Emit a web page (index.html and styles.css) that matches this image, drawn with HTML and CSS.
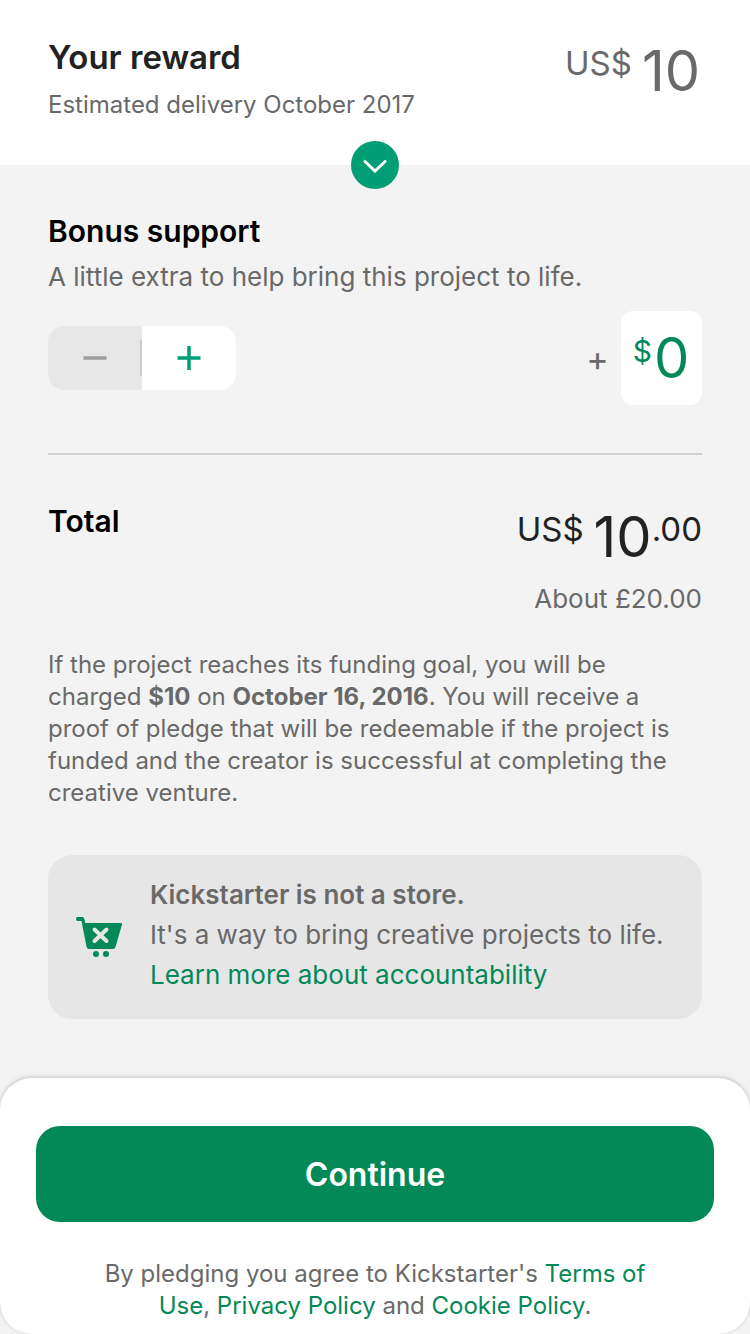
FILE: index.html
```html
<!DOCTYPE html>
<html lang="en">
<head>
<meta charset="utf-8">
<meta name="viewport" content="width=device-width, initial-scale=1">
<title>Your pledge</title>
<link rel="stylesheet" href="styles.css">
</head>
<body>
<main class="pledge">
  <header class="reward">
    <div class="reward-info">
      <h1 class="reward-title">Your reward</h1>
      <p class="delivery">Estimated delivery October 2017</p>
    </div>
    <p class="amount reward-amount"><span class="small">US$</span><span class="large">10</span></p>
    <button class="expand" type="button" aria-label="Show reward details">
      <svg width="24" height="16" viewBox="0 0 24 16" fill="none" stroke="#fff" stroke-width="3" stroke-linecap="round"><path d="M2 4.500 12 14 22 4.500"/></svg>
    </button>
  </header>
  <div class="content">
    <section class="bonus">
      <h2 class="heading">Bonus support</h2>
      <p class="bonus-text">A little extra to help bring this project to life.</p>
      <div class="bonus-controls">
        <div class="stepper">
          <button class="step minus" type="button" aria-label="Decrease bonus" disabled><svg width="24" height="24" viewBox="0 0 24 24"><path d="M.5 12H23.500" stroke="#9b9e9e" stroke-width="3.500"/></svg></button>
          <button class="step plus" type="button" aria-label="Increase bonus"><svg width="24" height="24" viewBox="0 0 24 24"><path d="M.5 12H23.500M12 0V24" stroke="#009e74" stroke-width="3.500"/></svg></button>
        </div>
        <div class="bonus-entry">
          <span class="sign">+</span>
          <label class="bonus-box"><span class="currency">$</span><input class="bonus-input" type="text" inputmode="numeric" value="0" aria-label="Bonus amount"></label>
        </div>
      </div>
    </section>
    <section class="total">
      <h2 class="heading">Total</h2>
      <div class="total-values">
        <p class="amount"><span class="small">US$</span><span class="large">10</span><span class="small cents">.00</span></p>
        <p class="about">About £20.00</p>
      </div>
    </section>
    <p class="terms">If the project reaches its funding goal, you will be charged <b>$10</b> on <b>October 16, 2016</b>. You will receive a proof of pledge that will be redeemable if the project is funded and the creator is successful at completing the creative venture.</p>
    <aside class="notice">
      <svg class="cart" width="48" height="44" viewBox="0 0 48 44"><path d="M1.500 4H6Q8 4 8.400 6L9.200 10H45Q46.500 10 46 11.500L39.500 34Q38.800 36 37 36H13Q11 36 10.600 34L5.500 8H1.500Q0 8 0 6T1.500 4Z" fill="#038857"/><path d="m18.500 16.500 12 11.500m0-11.500-12 11.500" stroke="#e6e6e6" stroke-width="4" stroke-linecap="round"/><circle cx="20" cy="41" r="3" fill="#038857"/><circle cx="30" cy="41" r="3" fill="#038857"/></svg>
      <div class="notice-text"><strong>Kickstarter is not a store.</strong><p>It's a way to bring creative projects to life.</p><a href="#accountability">Learn more about accountability</a></div>
    </aside>
  </div>
  <footer class="checkout">
    <button class="continue" type="button">Continue</button>
    <p class="legal">By pledging you agree to Kickstarter's <a href="#terms">Terms of Use</a>, <a href="#privacy">Privacy Policy</a> and <a href="#cookies">Cookie Policy</a>.</p>
  </footer>
</main>
</body>
</html>
```
FILE: styles.css
```css
* { box-sizing: border-box; }
body { margin: 0; background: #f3f3f3; color: #696969; font-family: Inter, "Liberation Sans", sans-serif; }
h1, h2, p { margin: 0; }
button, input { font: inherit; border: 0; padding: 0; }
svg { display: block; }
a { color: #038857; text-decoration: none; }
.pledge { display: flex; flex-direction: column; min-height: 100vh; }
.reward { position: relative; display: flex; justify-content: space-between; background: #fff; padding: 37px 50px 44px 48px; }
.reward-title { color: #222; font-size: 33px; line-height: 40px; font-weight: 600; }
.delivery { font-size: 24px; line-height: 32px; margin-top: 12px; }
.amount { display: flex; align-items: flex-start; line-height: 68px; }
.small { font-size: 33px; line-height: 52px; }
.large { font-size: 56px; margin-left: 10px; }
.expand { position: absolute; left: 50%; bottom: 0; transform: translate(-50%, 50%); width: 48px; height: 48px; border-radius: 50%; background: #009e74; display: grid; place-items: center; }
.content { flex: 1; padding: 48px 48px 56px; }
.heading { color: #000; font-size: 30px; line-height: 36px; font-weight: 600; }
.bonus { padding-bottom: 48px; border-bottom: 2px solid #d1d1d1; }
.bonus-text { font-size: 26px; line-height: 32px; margin-top: 12px; }
.bonus-controls { display: flex; justify-content: space-between; align-items: center; margin-top: 18px; }
.stepper { display: flex; width: 188px; border-radius: 16px; overflow: hidden; }
.step { flex: 1; height: 64px; display: grid; place-items: center; background: #fff; }
.minus { position: relative; background: #e7e7e7; }
.minus::after { content: ""; position: absolute; right: 0; top: 14px; bottom: 14px; width: 2px; background: #cdcdcd; }
.bonus-entry { display: flex; align-items: center; gap: 12px; }
.sign { font-size: 34px; }
.bonus-box { display: flex; align-items: flex-start; justify-content: center; gap: 2px; background: #fff; border-radius: 12px; padding: 12px; color: #038857; }
.currency { font-size: 30px; line-height: 56px; }
.bonus-input { width: 36px; height: 70px; font-size: 56px; color: #038857; background: transparent; }
.total { display: flex; justify-content: space-between; padding-top: 48px; }
.total-values { color: #222; }
.about { color: #696969; font-size: 26px; line-height: 32px; text-align: right; margin-top: 12px; }
.terms { font-size: 24px; line-height: 32px; margin-top: 34px; }
.notice { display: flex; align-items: center; gap: 26px; margin-top: 46px; padding: 20px 28px 24px; border-radius: 24px; background: #e6e6e6; font-size: 26px; line-height: 40px; }
.notice strong { font-weight: 600; }
.checkout { background: #fff; border-radius: 32px; padding: 48px 36px 12px; box-shadow: 0 -1px 4px rgba(0, 0, 0, 0.2); }
.continue { width: 100%; height: 96px; border-radius: 24px; background: #038857; color: #fff; font-size: 32px; font-weight: 600; }
.legal { margin-top: 36px; padding: 0 48px; text-align: center; font-size: 24px; line-height: 32px; }
```
